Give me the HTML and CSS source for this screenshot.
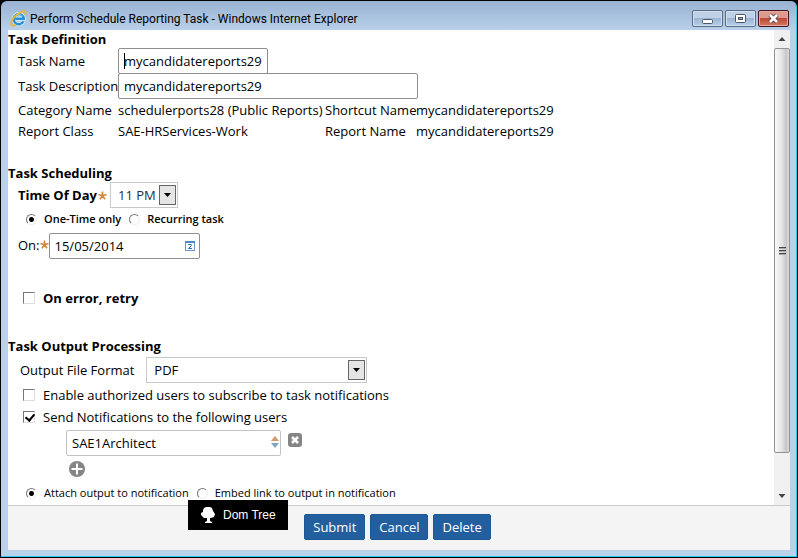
FILE: index.html
```html
<!DOCTYPE html>
<html lang="en">
<head>
<meta charset="utf-8">
<title>Perform Schedule Reporting Task</title>
<link rel="stylesheet" href="styles.css">
</head>
<body>
<div class="window">
  <header class="titlebar">
    <svg class="app-icon" viewBox="0 0 18 18" aria-hidden="true">
      <path d="M14.200 12A5.400 5.400 0 1 1 14.700 9.300H5.500" fill="none" stroke="#e4f4fd" stroke-width="4"/>
      <path d="M14.200 12A5.400 5.400 0 1 1 14.700 9.300H5.500" fill="none" stroke="#2490d6" stroke-width="2.600"/>
      <path d="M4.500 7A5.400 5.400 0 0 1 13.500 6.500" fill="none" stroke="#6ccaf5" stroke-width="1"/>
      <path d="M2.500 16.500C-1 15 3 8 8 4.500S16.500.500 16.500 3c0 1-.300 1.800-.800 2.500M2.500 16.500c1 .300 2.500-.200 4-1.200" fill="none" stroke="#efb52b" stroke-width="1.800"/>
    </svg>
    <h1 class="title">Perform Schedule Reporting Task - Windows Internet Explorer</h1>
    <div class="caption-buttons">
      <button class="caption" type="button" aria-label="Minimize"><svg viewBox="0 0 13 11"><rect x="1.500" y="6.500" width="10" height="4" rx="1" fill="#fff" stroke="#4c5669"/></svg></button>
      <button class="caption" type="button" aria-label="Maximize"><svg viewBox="0 0 13 11"><rect x="1.500" y="1.500" width="10" height="8" rx="1" fill="#fff" stroke="#4c5669"/><rect x="4.500" y="4.500" width="4" height="2" fill="#8ca9c9" stroke="#4c5669"/></svg></button>
      <button class="caption close" type="button" aria-label="Close"><svg viewBox="0 0 13 11"><path d="M3 2l7 7M10 2L3 9" stroke="#554652" stroke-width="4.500"/><path d="M3 2l7 7M10 2L3 9" stroke="#fff" stroke-width="2.600"/></svg></button>
    </div>
  </header>
  <form class="page">
    <div class="viewport">
      <main class="content">
        <section class="section">
          <h2>Task Definition</h2>
          <div class="fields">
            <label for="task-name">Task Name</label>
            <div class="wide name-box"><input class="text name" id="task-name" value="mycandidatereports29"><span class="caret"></span></div>
            <label for="task-desc">Task Description</label>
            <div class="wide"><input class="text description" id="task-desc" value="mycandidatereports29"></div>
            <span>Category Name</span><span>schedulerports28 (Public Reports)</span><span>Shortcut Name</span><span>mycandidatereports29</span>
            <span>Report Class</span><span>SAE-HRServices-Work</span><span>Report Name</span><span>mycandidatereports29</span>
          </div>
        </section>
        <section class="section">
          <h2>Task Scheduling</h2>
          <div class="row indent">
            <label class="strong" for="time">Time Of Day</label>
            <svg class="star" viewBox="0 0 9 9" aria-hidden="true"><path d="M4.500 4.800V.500M4.500 4.800L.500 3.500M4.500 4.800l4-1.300M4.500 4.800L2 8.300M4.500 4.800L7 8.300"/></svg>
            <span class="select time"><select id="time"><option>11 PM</option></select><svg class="drop" viewBox="0 0 17 20" aria-hidden="true"><rect class="drop-face" x=".500" y=".500" width="16" height="19"/><path d="M5 8h7l-3.500 4z"/></svg></span>
          </div>
          <div class="row options semibold">
            <input type="radio" name="repeat" id="once" checked><label for="once">One-Time only</label>
            <input type="radio" name="repeat" id="recurring"><label for="recurring">Recurring task</label>
          </div>
          <div class="row indent">
            <label for="date">On:</label>
            <svg class="star tight" viewBox="0 0 9 9" aria-hidden="true"><path d="M4.500 4.800V.500M4.500 4.800L.500 3.500M4.500 4.800l4-1.300M4.500 4.800L2 8.300M4.500 4.800L7 8.300"/></svg>
            <span class="date-box"><input class="text" id="date" value="15/05/2014"><svg class="calendar" viewBox="0 0 10 10" aria-hidden="true"><rect x=".500" y=".500" width="9" height="9" fill="#fff" stroke="#6a9bd6"/><path d="M0 0h10v2H0z" fill="#4d88cd"/><path d="M3 3.500h3.200v1.300L3.500 7.500H7" fill="none" stroke="#2f6bb8"/></svg></span>
          </div>
          <div class="row check strong retry"><input type="checkbox" id="retry"><label for="retry">On error, retry</label></div>
        </section>
        <section class="section">
          <h2>Task Output Processing</h2>
          <div class="row format-row">
            <label for="format">Output File Format</label>
            <span class="select format"><select id="format"><option>PDF</option></select><svg class="drop" viewBox="0 0 17 20" aria-hidden="true"><rect class="drop-face" x=".500" y=".500" width="16" height="19"/><path d="M5 8h7l-3.500 4z"/></svg></span>
          </div>
          <div class="row check"><input type="checkbox" id="subscribe"><label for="subscribe">Enable authorized users to subscribe to task notifications</label></div>
          <div class="row check"><input type="checkbox" id="notify" checked><label for="notify">Send Notifications to the following users</label></div>
          <div class="row users">
            <span class="user-box"><input class="text" aria-label="User" value="SAE1Architect"><svg class="spin" viewBox="0 0 8 12" aria-hidden="true"><path d="M0 5l4-5 4 5z" fill="#d29a68"/><path d="M0 7h8l-4 5z" fill="#7fa5bf"/></svg></span>
            <button class="icon-button" type="button" aria-label="Remove user"><svg viewBox="0 0 14 14"><rect width="14" height="14" rx="3" fill="#858585"/><path d="M4 4l6 6M10 4l-6 6" stroke="#fff" stroke-width="2.600"/></svg></button>
          </div>
          <div class="row add-row"><button class="icon-button add" type="button" aria-label="Add user"><svg viewBox="0 0 16 16"><circle cx="8" cy="8" r="8" fill="#858585"/><path d="M8 2.500v11M2.500 8h11" stroke="#fff" stroke-width="2"/></svg></button></div>
          <div class="row options">
            <input type="radio" name="output" id="attach" checked><label for="attach">Attach output to notification</label>
            <input type="radio" name="output" id="embed"><label for="embed">Embed link to output in notification</label>
          </div>
        </section>
      </main>
      <div class="scrollbar" aria-hidden="true">
        <svg class="arrow" viewBox="0 0 16 18"><path d="M4.500 11L8 7l3.500 4z"/></svg>
        <div class="thumb"><i></i><i></i><i></i></div>
        <svg class="arrow end" viewBox="0 0 16 18"><path d="M4.500 7h7L8 11z"/></svg>
      </div>
    </div>
    <footer class="actions">
      <button class="action" type="button">Submit</button>
      <button class="action" type="button">Cancel</button>
      <button class="action" type="button">Delete</button>
    </footer>
  </form>
  <button class="dom-tree" type="button">
    <svg viewBox="0 0 14 16" aria-hidden="true"><path d="M5 0h4l2 1 1 3 2 3-1 3-3 1H9v3l2 1v1H4v-1l2-1v-3H3L1 9 0 8V6l2-1V3l1-2z" fill="#fff"/></svg>
    Dom Tree
  </button>
</div>
</body>
</html>
```
FILE: styles.css
```css
* { box-sizing: border-box; }

body {
  margin: 0;
  min-height: 100vh;
  display: flex;
  padding: 1px;
  background: #000;
  color: #000;
  font: 13px/18px "Open Sans", "Noto Sans", sans-serif;
}

input, select, button { font: inherit; color: inherit; margin: 0; }
h1, h2 { margin: 0; font-size: inherit; }

.window {
  position: relative;
  flex: 1;
  display: flex;
  flex-direction: column;
  padding: 0 6px 6px 7px;
  background: linear-gradient(#98b2d1, #b9d1ea 30px);
  border-right: 1px solid #29cce5;
  border-bottom: 1px solid #29cce5;
  border-radius: 6px 6px 0 0;
}

.titlebar {
  display: flex;
  align-items: center;
  height: 29px;
  padding: 6px 1px 0 2px;
}

.app-icon { width: 17px; height: 17px; margin-right: 3px; }

.title {
  flex: 1;
  font: 12px/18px Roboto, "Open Sans", sans-serif;
  white-space: nowrap;
}

.caption-buttons { display: flex; gap: 2px; }

.caption {
  display: grid;
  place-items: center;
  width: 31px;
  height: 17px;
  padding: 0;
  border: 1px solid #586b87;
  border-radius: 2px;
  background: linear-gradient(#bfd1e7 50%, #9bb4d2 50%, #b8d0ea);
  box-shadow: inset 0 0 0 1px #d2e0f0;
}
.caption svg { width: 13px; height: 11px; }
.close {
  border-color: #441521;
  background: linear-gradient(#dc9b8d 50%, #bd4935 50%, #d17c61);
  box-shadow: inset 0 0 0 1px #e3aaa0;
}

.page { flex: 1; display: flex; flex-direction: column; background: #fff; }
.viewport { flex: 1; display: flex; }
.content { flex: 1; min-width: 0; }
.section { margin-bottom: 23px; }
.section:last-child { margin-bottom: 0; }
.strong, h2 { font-weight: 700; }
.semibold { font-weight: 600; }

.fields {
  display: grid;
  grid-template-columns: 100px 207px 91px 1fr;
  grid-template-rows: 25px 26px 21px 21px;
  align-items: center;
  padding-left: 10px;
  white-space: nowrap;
}
.wide { grid-column: 2 / -1; }

.text {
  display: block;
  width: 100%;
  height: 26px;
  padding: 0 5px;
  border: 1px solid #8f8f8f;
  border-radius: 2px;
  background: #fff;
  outline: 0;
}
.name { width: 150px; }
.description { width: 300px; }
.name-box { position: relative; }
.caret { position: absolute; left: 6px; top: 5px; width: 1px; height: 16px; background: #000; }

.row { display: flex; align-items: center; white-space: nowrap; }
.indent { padding-left: 10px; }

.star { width: 9px; height: 9px; margin: 0 3px 0 1px; fill: none; stroke: #d5873c; stroke-width: 1.700; }
.tight { margin: 0; }

.select { position: relative; }
.select select {
  display: block;
  width: 100%;
  height: 26px;
  padding: 0 7px;
  appearance: none;
  border: 1px solid #c9c9c9;
  border-radius: 0;
  background: #fff;
}
.time { width: 68px; }
.time select { color: #1b2f4a; }
.format { width: 221px; }
.drop { position: absolute; right: 2px; top: 3px; width: 17px; height: 20px; pointer-events: none; }
.drop-face { fill: #e5e5e5; stroke: #666; }

.options { height: 22px; padding-left: 18px; font-size: 11px; }
.options label { margin: 0 8px 0 6px; }

input[type="radio"], input[type="checkbox"] {
  appearance: none;
  flex: none;
  width: 12px;
  height: 12px;
  border: 1px solid;
  border-color: #777 #ddd #ddd #777;
  background: #fff;
}
input[type="radio"] { width: 11px; height: 11px; margin-right: 1px; border-radius: 50%; border-color: #777 #eee #eee #777; }
input[type="radio"]:checked { background: radial-gradient(circle, #000 2px, #fff 3px); }
input[type="checkbox"]:checked::before {
  content: "";
  display: block;
  width: 4px;
  height: 7px;
  margin: 0 3px;
  border: solid #000;
  border-width: 0 2px 2px 0;
  transform: rotate(40deg);
}

.date-box { position: relative; width: 151px; margin-top: 3px; }
.calendar { position: absolute; right: 5px; top: 8px; width: 10px; height: 10px; }

.check { height: 22px; padding-left: 15px; gap: 8px; }
.retry { margin-top: 28px; margin-bottom: 28px; }
.format-row { padding: 2px 0 1px 12px; gap: 12px; }

.users { align-items: flex-start; padding: 2px 0 0 58px; gap: 7px; }
.user-box { position: relative; width: 215px; }
.user-box .text { border-color: #c3c3c3; }
.spin { position: absolute; right: 2px; top: 6px; width: 8px; height: 12px; }
.icon-button { display: block; width: 14px; height: 20px; padding: 0; border: 0; background: none; }
.icon-button svg { display: block; width: 100%; }
.add { width: 16px; height: 16px; }
.add-row { height: 26px; padding-left: 61px; }

.scrollbar {
  width: 16px;
  display: flex;
  flex-direction: column;
  background: #f0f0f0;
}
.arrow { display: block; width: 16px; height: 18px; fill: #444; }
.thumb {
  flex: 1;
  display: flex;
  flex-direction: column;
  align-items: center;
  justify-content: center;
  gap: 1px;
  margin-bottom: 34px;
  border: 1px solid #929292;
  border-radius: 2px;
  background: linear-gradient(90deg, #f8f8f8, #e6e6e7 45%, #c5c6ca 80%, #dedede);
}
.thumb i { width: 7px; height: 2px; border-top: 1px solid #444; background: #aaa; }

.actions {
  display: flex;
  justify-content: center;
  gap: 5px;
  height: 45px;
  padding: 8px 3px 0 0;
  border-top: 1px solid #c8c8c8;
  background: #f4f4f4;
}
.action {
  height: 26px;
  padding: 0 8px;
  border: 1px solid #1f5896;
  border-radius: 2px;
  background: #235f9f;
  color: #fff;
}

.dom-tree {
  position: absolute;
  left: 187px;
  bottom: 26px;
  display: flex;
  align-items: center;
  gap: 8px;
  width: 100px;
  height: 30px;
  padding: 0 0 0 13px;
  border: 0;
  background: #000;
  color: #fff;
  font: 12px/16px "Liberation Sans", sans-serif;
}
.dom-tree svg { width: 14px; height: 16px; }
```
